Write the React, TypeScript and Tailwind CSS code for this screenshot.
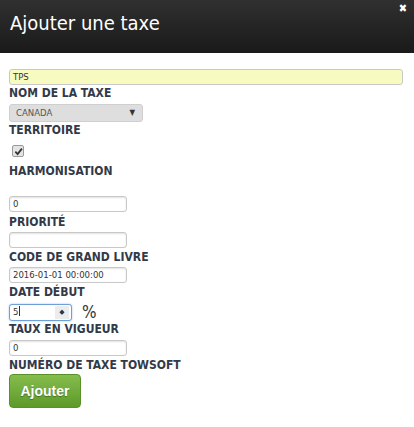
import React from "react";

const label = "block h-[14px] text-[12px] font-bold leading-[14px] text-[#323a48] uppercase";
const input =
  "block h-[16px] w-[118px] rounded-[3px] border border-[#c8c8c8] bg-white px-[3px] text-[9.5px] leading-[14px] text-[#333] shadow-[inset_0_1px_2px_rgba(0,0,0,0.12)]";

export default function App() {
  return (
    <div
      className="h-[427px] w-[414px] bg-white"
      style={{ fontFamily: '"DejaVu Sans Condensed", "DejaVu Sans", Verdana, sans-serif' }}
    >
      <div className="relative h-[53px] bg-gradient-to-b from-[#303030] to-[#1a1a1a] px-[10px] pt-[10px]">
        <h1 className="text-[20px] leading-[26px] text-white">Ajouter une taxe</h1>
        <span className="absolute right-[7px] top-[3px] text-[11px] font-bold leading-[12px] text-white">✖</span>
      </div>

      <div className="px-[9px] pt-[16px]">
        <div className="h-[16px] w-[394px] rounded-[3px] border border-[#c8c8c8] bg-[#f8fbbf] px-[3px] text-[9.5px] leading-[14px] text-[#333]">
          TPS
        </div>
        <span className={`${label} mt-[1px]`}>Nom de la taxe</span>

        <div className="mt-[4px] flex h-[18px] w-[134px] items-center justify-between rounded-[3px] border border-[#cfcfcf] bg-[#dedede] pl-[6px] pr-[7px] text-[9.5px] text-[#555]">
          <span>CANADA</span>
          <span className="text-[8px] text-[#333]">▼</span>
        </div>
        <span className={`${label} mt-[1px]`}>Territoire</span>

        <div className="ml-[3px] mt-[8px] flex h-[12px] w-[12px] items-center justify-center rounded-[2px] border border-[#9a9a9a] bg-[#e4e4e4]">
          <svg width="9" height="9" viewBox="0 0 10 10">
            <path d="M1.5 5.2 L4 7.8 L8.8 1.8" stroke="#333" strokeWidth="2" fill="none" />
          </svg>
        </div>
        <span className={`${label} mt-[7px]`}>Harmonisation</span>

        <div className={`${input} mt-[18px]`}>0</div>
        <span className={`${label} mt-[3px]`}>Priorité</span>

        <div className={`${input} mt-[3px]`}></div>
        <span className={`${label} mt-[2px]`}>Code de grand livre</span>

        <div className={`${input} mt-[3px]`}>2016-01-01 00:00:00</div>
        <span className={`${label} mt-[2px]`}>Date début</span>

        <div className="mt-[5px] flex h-[17px] items-start gap-[10px]">
          <div className="flex h-[17px] w-[63px] items-center justify-between rounded-[3px] border border-[#6ea0d8] bg-white pl-[3px] pr-[2px] text-[9.5px] text-[#333] shadow-[0_0_2px_rgba(82,150,230,0.6)]">
            <span>
              5<span className="ml-px inline-block h-[10px] w-px translate-y-[1px] bg-[#333]"></span>
            </span>
            <span className="flex h-[13px] w-[14px] items-center justify-center bg-[#ececec] text-[7px] text-[#333]">◆</span>
          </div>
          <span className="-mt-[2px] text-[17px] leading-[20px] text-[#333]">%</span>
        </div>
        <span className={`${label} mt-[1px]`}>Taux en vigueur</span>

        <div className={`${input} mt-[4px]`}>0</div>
        <span className={`${label} mt-[2px]`}>Numéro de taxe Towsoft</span>

        <button
          className="mt-[2px] block h-[34px] w-[72px] rounded-[4px] border border-[#5a9028] bg-gradient-to-b from-[#86bd4c] to-[#5c9a2a] text-[14px] font-bold text-white [text-shadow:0_1px_1px_rgba(0,0,0,0.35)]"
          style={{ fontFamily: '"Liberation Sans", Arial, sans-serif' }}
        >
          Ajouter
        </button>
      </div>
    </div>
  );
}
